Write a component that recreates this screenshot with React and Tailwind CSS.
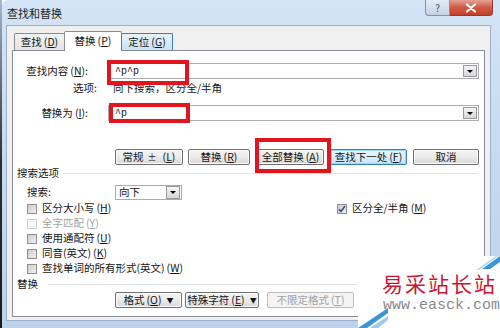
import React from "react";

const M = ({ k }) => (
  <span className="ml-[2px]">
    (<span className="underline underline-offset-[1px]">{k}</span>)
  </span>
);

const Arrow = ({ className = "" }) => (
  <div
    className={`w-[14px] h-[12px] border border-[#9a9a9a] bg-gradient-to-b from-[#f6f6f6] to-[#d6d6d6] flex items-center justify-center ${className}`}
  >
    <div className="w-0 h-0 border-l-[3px] border-r-[3px] border-t-[3px] border-l-transparent border-r-transparent border-t-black" />
  </div>
);

function Btn({ children, className = "" }) {
  return (
    <div
      className={`h-[16px] flex items-center justify-center rounded-[2px] border border-[#707070] bg-gradient-to-b from-[#f4f4f4] via-[#ebebeb] to-[#d8d8d8] shadow-[inset_0_0_0_1px_#fbfbfb] ${className}`}
    >
      {children}
    </div>
  );
}

const Cb = ({ disabled, checked }) => (
  <div
    className={`w-[10px] h-[10px] border flex items-center justify-center ${
      disabled
        ? "border-[#cfcfcf] bg-[#f6f6f6]"
        : "border-[#8f8f8f] bg-gradient-to-br from-[#cdcdcd] to-[#efefef]"
    }`}
  >
    {checked && (
      <svg width="8" height="8" viewBox="0 0 8 8">
        <path d="M1 4.2 L3 6.5 L7 1" fill="none" stroke="#2b4f8a" strokeWidth="1.6" />
      </svg>
    )}
  </div>
);

const RedBox = ({ className }) => (
  <div className={`absolute border-[4px] border-[#e3141d] z-20 pointer-events-none ${className}`} />
);

export default function App() {
  return (
    <div className="relative w-[500px] h-[328px] flex overflow-hidden font-['Noto_Sans_CJK_SC',sans-serif] text-[10.5px] leading-none text-[#141414]">
      <div className="w-[2px] h-full bg-gradient-to-b from-[#9fb8d2] via-[#2e2e2e] to-[#1a1a1a]" />
      <div className="flex-1 flex flex-col rounded-tl-[6px] bg-gradient-to-b from-[#d3e4f5] via-[#c5daf0] to-[#bdd3ec]">
        {/* title bar */}
        <div className="h-[25px] flex items-start justify-between pl-[5px] pr-[7px]">
          <div className="mt-[8px] text-[11px] text-[#1e1e1e]">查找和替换</div>
          <div className="flex">
            <div className="w-[25px] h-[16px] rounded-bl-[4px] border border-[#7f93ab] border-t-0 bg-gradient-to-b from-[#e3ecf6] to-[#c3d3e6] flex items-center justify-center text-[10px] text-[#3a4a5e]">
              ?
            </div>
            <div className="w-[43px] h-[16px] rounded-br-[4px] border border-[#8b3a3a] border-t-0 border-l-0 bg-gradient-to-b from-[#e4a193] via-[#cf5a45] to-[#c23f2d] flex items-center justify-center">
              <svg width="12" height="10" viewBox="0 0 12 10">
                <path d="M2 1.5 L10 8.5 M10 1.5 L2 8.5" stroke="#fff" strokeWidth="2.2" strokeLinecap="round" />
              </svg>
            </div>
          </div>
        </div>

        {/* body */}
        <div className="flex-1 ml-[4px] mr-[9px] mb-[7px] bg-[#f0f0f0] border border-[#9fb1c6] flex flex-col pt-[5px] px-[5px] pb-[3px]">
          {/* tabs */}
          <div className="relative z-10 h-[19px] flex items-end pl-[2px]">
            <div className="w-[51px] h-[17px] border border-b-0 border-[#898c95] rounded-t-[2px] bg-gradient-to-b from-[#f3f3f3] to-[#e4e4e4] flex items-center justify-center">
              查找<M k="D" />
            </div>
            <div className="w-[58px] h-[20px] -mb-[1px] -ml-px border border-b-0 border-[#898c95] rounded-t-[2px] bg-white flex items-center justify-center pb-[1px]">
              替换<M k="P" />
            </div>
            <div className="w-[52px] h-[17px] -ml-px border border-b-0 border-[#3c7fb1] rounded-t-[2px] bg-gradient-to-b from-[#e8f3fc] to-[#c7e2f7] flex items-center justify-center">
              定位<M k="G" />
            </div>
          </div>

          {/* panel */}
          <div className="flex-1 bg-white border border-[#898c95] flex flex-col">
            {/* find */}
            <div className="mt-[12px] h-[16px] flex items-center">
              <div className="w-[75px] text-right">
                查找内容<M k="N" />:
              </div>
              <div className="relative ml-[20px] w-[371px] h-[16px] border border-[#abadb3] bg-white flex items-center justify-between pl-[6px] pr-[1px]">
                <span className="font-['Liberation_Mono',monospace] text-[10px] pt-[2px]">^p^p</span>
                <Arrow />
                <RedBox className="-left-[2px] -top-[4px] w-[82px] h-[25px]" />
              </div>
            </div>

            {/* options */}
            <div className="mt-[3px] h-[12px] flex items-center">
              <div className="w-[84px] text-right">选项:</div>
              <div className="ml-[16px]">向下搜索，区分全/半角</div>
            </div>

            {/* replace */}
            <div className="mt-[11px] h-[16px] flex items-center">
              <div className="w-[75px] text-right">
                替换为<M k="I" />:
              </div>
              <div className="relative ml-[20px] w-[371px] h-[16px] border border-[#abadb3] bg-white flex items-center justify-between pl-[6px] pr-[1px]">
                <span className="font-['Liberation_Mono',monospace] text-[10px] pt-[2px]">^p</span>
                <Arrow />
                <RedBox className="left-0 -top-[3px] w-[81px] h-[20px]" />
              </div>
            </div>

            {/* buttons */}
            <div className="mt-[28px] h-[16px] flex pl-[102px]">
              <Btn className="w-[68px]">
                常规 <span className="mx-[4px] text-[9px]">±</span>
                <M k="L" />
              </Btn>
              <Btn className="ml-[5px] w-[62px]">
                替换<M k="R" />
              </Btn>
              <div className="relative ml-[7px]">
                <Btn className="w-[67px]">
                  全部替换<M k="A" />
                </Btn>
                <RedBox className="-left-[2px] -top-[11px] w-[76px] h-[35px]" />
              </div>
              <div className="ml-[6px] w-[77px] h-[16px] flex items-center justify-center rounded-[2px] border border-[#3c7fb1] bg-gradient-to-b from-[#eaf6fd] via-[#d9f0fc] to-[#bee6fd] shadow-[inset_0_0_0_1px_#9fd5f5]">
                查找下一处<M k="F" />
              </div>
              <Btn className="ml-[6px] w-[66px]">取消</Btn>
            </div>

            {/* search options header */}
            <div className="mt-[2px] h-[12px] flex items-center pl-[4px] pr-[6px]">
              <span>搜索选项</span>
              <div className="flex-1 ml-[4px] h-px bg-[#dde3e8]" />
            </div>

            {/* search direction */}
            <div className="mt-[6px] h-[15px] flex items-center">
              <div className="w-[102px] pl-[14px]">搜索:</div>
              <div className="w-[67px] h-[15px] border border-[#a5acb5] bg-white flex items-center justify-between pl-[3px] pr-[1px]">
                <span>向下</span>
                <Arrow className="h-[13px]" />
              </div>
            </div>

            {/* checkboxes */}
            <div className="mt-[1px] h-[15px] flex items-center pl-[14px]">
              <div className="w-[310px] flex items-center">
                <Cb />
                <span className="ml-[5px]">
                  区分大小写<M k="H" />
                </span>
              </div>
              <div className="flex items-center">
                <Cb checked />
                <span className="ml-[5px]">
                  区分全/半角<M k="M" />
                </span>
              </div>
            </div>
            <div className="h-[15px] flex items-center pl-[14px] text-[#a3a3a3]">
              <Cb disabled />
              <span className="ml-[5px]">
                全字匹配<M k="Y" />
              </span>
            </div>
            <div className="h-[15px] flex items-center pl-[14px]">
              <Cb />
              <span className="ml-[5px]">
                使用通配符<M k="U" />
              </span>
            </div>
            <div className="h-[15px] flex items-center pl-[14px]">
              <Cb />
              <span className="ml-[5px]">
                同音(英文)<M k="K" />
              </span>
            </div>
            <div className="h-[15px] flex items-center pl-[14px]">
              <Cb />
              <span className="ml-[5px]">
                查找单词的所有形式(英文)<M k="W" />
              </span>
            </div>

            {/* replace header */}
            <div className="mt-[2px] h-[12px] flex items-center pl-[4px] pr-[6px]">
              <span>替换</span>
              <div className="flex-1 ml-[10px] h-px bg-[#dde3e8]" />
            </div>

            {/* bottom buttons */}
            <div className="mt-[2px] h-[16px] flex pl-[102px]">
              <Btn className="w-[67px]">
                格式<M k="O" />
                <span className="ml-[5px] text-[7px]">▼</span>
              </Btn>
              <Btn className="ml-[3px] w-[74px]">
                特殊字符<M k="E" />
                <span className="ml-[5px] text-[7px]">▼</span>
              </Btn>
              <div className="ml-[8px] w-[87px] h-[16px] flex items-center justify-center rounded-[2px] border border-[#bdbdbd] bg-[#f4f4f4] text-[#a0a0a0]">
                不限定格式<M k="T" />
              </div>
            </div>
          </div>
        </div>
      </div>

      {/* watermark overlay */}
      <div className="absolute left-[358px] top-[256px] w-[142px] h-[72px] bg-white">
        <svg className="absolute inset-0" width="142" height="72" viewBox="0 0 142 72">
          <polygon points="0,72 30,52 30,57 9,72" fill="#3a96d8" />
          <polygon points="12,72 30,60 30,64 20,72" fill="#9ccbef" />
          <polygon points="124,13 142,0 142,6 132,13" fill="#3a96d8" />
          <polygon points="118,14 142,-3 142,-1 121,14" fill="#b5d8f2" />
        </svg>
        <div className="absolute left-[24px] top-[17px] text-[21px] leading-none tracking-[2px] text-[#cc1530] whitespace-nowrap font-['Noto_Sans_CJK_SC',serif]">
          易采站长站
        </div>
        <div className="absolute left-[25px] top-[42px] text-[15px] leading-none text-[#8a8a8a] whitespace-nowrap font-['Liberation_Mono',monospace]">
          www.easck.com
        </div>
      </div>
    </div>
  );
}
